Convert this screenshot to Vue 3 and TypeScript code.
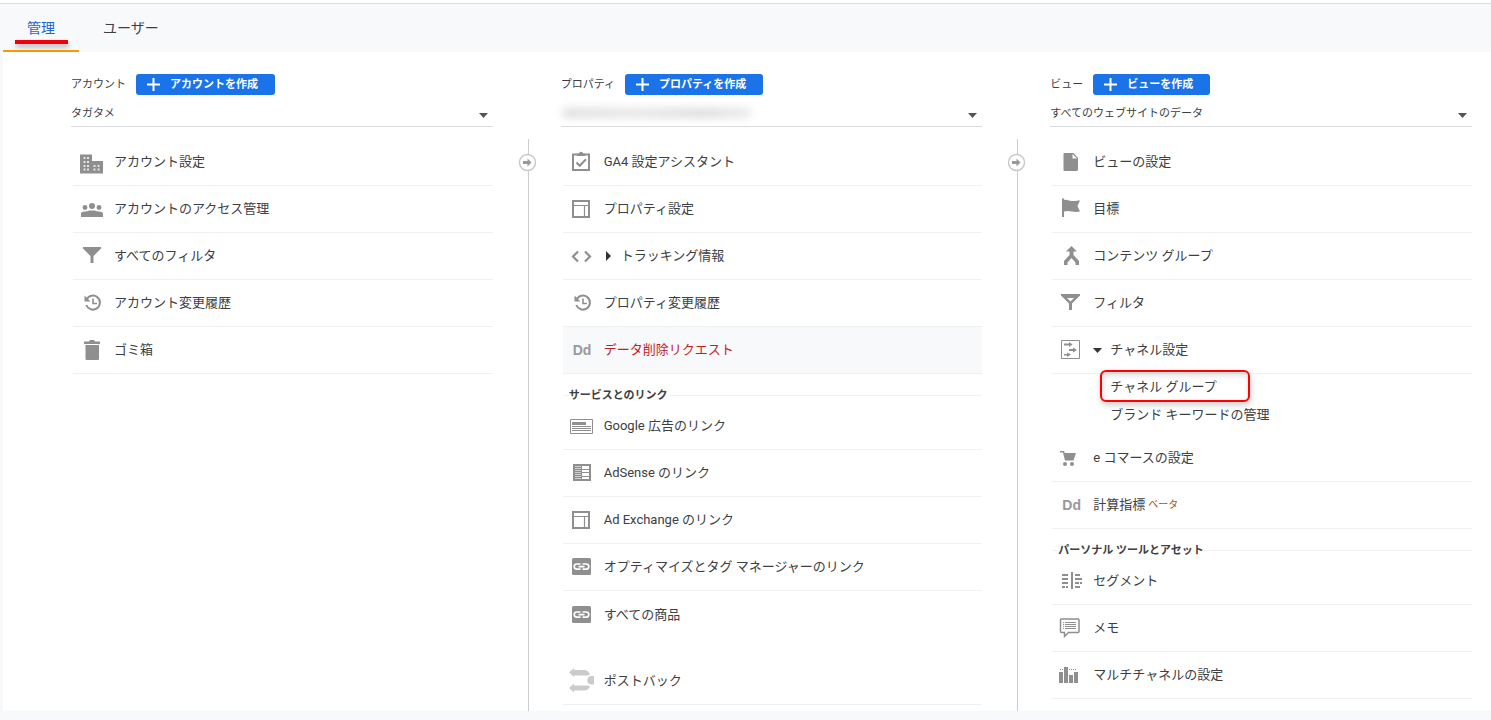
<script setup lang="ts">
import { ref } from 'vue'

interface Item {
  icon: string
  label: string
  expand?: 'open' | 'closed'
  children?: string[]
  badge?: string
  alert?: boolean
  plain?: boolean
  spaced?: boolean
}
interface Section {
  title?: string
  items: Item[]
}
interface Column {
  id: string
  title: string
  create: string
  selected: string
  masked?: boolean
  sections: Section[]
}

const activeTab = ref('管理')
const tabs = ['管理', 'ユーザー']

const columns: Column[] = [
  {
    id: 'account',
    title: 'アカウント',
    create: 'アカウントを作成',
    selected: 'タガタメ',
    sections: [
      {
        items: [
          { icon: 'building', label: 'アカウント設定' },
          { icon: 'people', label: 'アカウントのアクセス管理' },
          { icon: 'funnel', label: 'すべてのフィルタ' },
          { icon: 'history', label: 'アカウント変更履歴' },
          { icon: 'trash', label: 'ゴミ箱' },
        ],
      },
    ],
  },
  {
    id: 'property',
    title: 'プロパティ',
    create: 'プロパティを作成',
    selected: '',
    masked: true,
    sections: [
      {
        items: [
          { icon: 'check', label: 'GA4 設定アシスタント' },
          { icon: 'layout', label: 'プロパティ設定' },
          { icon: 'code', label: 'トラッキング情報', expand: 'closed' },
          { icon: 'history', label: 'プロパティ変更履歴' },
          { icon: 'dd', label: 'データ削除リクエスト', alert: true },
        ],
      },
      {
        title: 'サービスとのリンク',
        items: [
          { icon: 'card', label: 'Google 広告のリンク' },
          { icon: 'news', label: 'AdSense のリンク' },
          { icon: 'layout', label: 'Ad Exchange のリンク' },
          { icon: 'link', label: 'オプティマイズとタグ マネージャーのリンク' },
          { icon: 'link', label: 'すべての商品', plain: true },
          { icon: 'postback', label: 'ポストバック', spaced: true },
        ],
      },
    ],
  },
  {
    id: 'view',
    title: 'ビュー',
    create: 'ビューを作成',
    selected: 'すべてのウェブサイトのデータ',
    sections: [
      {
        items: [
          { icon: 'file', label: 'ビューの設定' },
          { icon: 'flag', label: '目標' },
          { icon: 'merge', label: 'コンテンツ グループ' },
          { icon: 'funnelLine', label: 'フィルタ' },
          {
            icon: 'channel',
            label: 'チャネル設定',
            expand: 'open',
            children: ['チャネル グループ', 'ブランド キーワードの管理'],
          },
          { icon: 'cart', label: 'e コマースの設定' },
          { icon: 'dd', label: '計算指標', badge: 'ベータ' },
        ],
      },
      {
        title: 'パーソナル ツールとアセット',
        items: [
          { icon: 'segment', label: 'セグメント' },
          { icon: 'memo', label: 'メモ' },
          { icon: 'bars', label: 'マルチチャネルの設定' },
        ],
      },
    ],
  },
]
</script>

<template>
  <div class="topline"></div>
  <nav class="tabs" role="tablist">
    <button
      v-for="t in tabs"
      :key="t"
      type="button"
      role="tab"
      class="tab"
      :class="{ active: t === activeTab }"
      :aria-selected="t === activeTab"
      @click="activeTab = t"
    >
      {{ t }}
      <span v-if="t === '管理'" class="underline-mark"></span>
    </button>
  </nav>

  <main class="panel">
    <template v-for="(col, ci) in columns" :key="col.id">
      <div v-if="ci > 0" class="divider">
        <svg class="divider-arrow" width="19" height="19" viewBox="0 0 19 19" aria-hidden="true">
          <circle cx="9.5" cy="9.5" r="8" fill="#fff" stroke="#c8c8c8" stroke-width="1.4" />
          <path d="M5 8h4.500V5.500L13.500 9.500l-4 4V11H5z" fill="#999" />
        </svg>
      </div>
      <section class="column">
        <header class="col-head">
          <label :for="col.id">{{ col.title }}</label>
          <button type="button" class="create">
            <svg width="13" height="13" viewBox="0 0 13 13" aria-hidden="true">
              <path d="M6.500 0v13M0 6.500h13" stroke="#fff" stroke-width="2" />
            </svg>
            <span>{{ col.create }}</span>
          </button>
        </header>
        <div class="picker">
          <select :id="col.id">
            <option>{{ col.selected }}</option>
          </select>
          <span v-if="col.masked" class="mask"></span>
          <svg class="caret" width="9" height="5" viewBox="0 0 9 5" aria-hidden="true">
            <path d="M0 0h9L4.500 5z" fill="#555" />
          </svg>
        </div>

        <div class="list">
          <template v-for="(sec, si) in col.sections" :key="si">
            <h2 v-if="sec.title" class="sec-title"><span>{{ sec.title }}</span></h2>
            <template v-for="it in sec.items" :key="it.label">
              <component
                :is="it.expand ? 'button' : 'a'"
                :href="it.expand ? undefined : '#'"
                :type="it.expand ? 'button' : undefined"
                :aria-expanded="it.expand ? it.expand === 'open' : undefined"
                class="item"
                :class="{ alert: it.alert, plain: it.plain, spaced: it.spaced }"
              >
                <span v-if="it.icon === 'dd'" class="dd">Dd</span>
                <svg v-else class="icon" width="41" height="46" viewBox="0 0 41 46" aria-hidden="true">
                  <g v-if="it.icon === 'building'">
                    <path d="M7 15.500h12v6.500h11v12.500H7z" />
                    <path
                      fill="#e4e4e4"
                      d="M10.500 18h2v2h-2zM14 18h2v2h-2zM10.500 22h2v2h-2zM14 22h2v2h-2zM10.500 26h2v2h-2zM14 26h2v2h-2zM10.500 29.500h2v2h-2zM14 29.500h2v2h-2zM20.500 26h2v2h-2zM24.500 26h2v2h-2zM20.500 29.500h2v2h-2zM24.500 29.500h2v2h-2z"
                    />
                  </g>
                  <g v-else-if="it.icon === 'people'">
                    <circle cx="12" cy="21.500" r="2.400" />
                    <circle cx="19" cy="20" r="3" />
                    <circle cx="26" cy="21.500" r="2.400" />
                    <path d="M8 31v-3C8 26 10.500 25.500 13 25.500 15 24 23 24 25 25.500 27.500 25.500 30 26 30 28v3z" />
                  </g>
                  <path v-else-if="it.icon === 'funnel'" d="M10 14h18v1.500l-7.500 7.500v7h-3v-7L10 15.500z" />
                  <g v-else-if="it.icon === 'history'" fill="none" stroke="#8f8f8f">
                    <path d="M13.600 19.500a7 7 0 1 1-.3 5.500" stroke-width="2" />
                    <path d="M20 18.500v5h4" stroke-width="1.600" />
                    <path d="M11.500 15.500v6h6z" fill="#8f8f8f" stroke="none" />
                  </g>
                  <path
                    v-else-if="it.icon === 'trash'"
                    d="M11 14.500h5l1-1.500h4l1 1.500h5v2.500H11zM12.500 18h13.500V32a1 1 0 0 1-1 1H13.500a1 1 0 0 1-1-1z"
                  />
                  <g v-else-if="it.icon === 'check'">
                    <path d="M10 15.500h16V31H10z" fill="none" stroke="#8f8f8f" stroke-width="2" />
                    <path d="M14 14.500h1.800a2.300 2.300 0 0 1 4.400 0H22V17h-8z" />
                    <path d="M13.500 23.500l3.200 3.200 6.300-6.500" fill="none" stroke="#8f8f8f" stroke-width="2" />
                  </g>
                  <g v-else-if="it.icon === 'layout'" fill="none" stroke="#8f8f8f">
                    <path d="M10 15h16v16H10z" stroke-width="2" />
                    <path d="M11 19.500h14M21.500 20v10" stroke-width="1.200" />
                  </g>
                  <path
                    v-else-if="it.icon === 'code'"
                    d="M15 18.500l-5 5 5 5M22 18.500l5 5-5 5"
                    fill="none"
                    stroke="#8f8f8f"
                    stroke-width="2.200"
                  />
                  <g v-else-if="it.icon === 'card'">
                    <path d="M7.500 16.500h22v14h-22z" fill="none" stroke="#8f8f8f" />
                    <path d="M9 19h14v3H9zM9 23h19v1H9zM9 25h19v1H9zM9 27h19v1H9z" />
                  </g>
                  <g v-else-if="it.icon === 'news'">
                    <path d="M10 14h18v17H10z" />
                    <path
                      fill="#cfcfcf"
                      d="M12 16h6v1h-6zM12 18h6v1h-6zM12 20h6v1h-6zM12 22h6v1h-6zM12 24h6v1h-6zM12 26h6v1h-6zM12 28h6v1h-6z"
                    />
                    <path fill="#fff" d="M19 16h7v3h-7zM19 20h7v2h-7zM19 23h7v3h-7zM19 27h7v2h-7z" />
                  </g>
                  <g v-else-if="it.icon === 'link'">
                    <rect x="9" y="14" width="19" height="17" rx="1.500" />
                    <path
                      d="M17.500 20h-3.700a2.600 2.600 0 0 0 0 5.200h3.700M19.500 20h3.700a2.600 2.600 0 0 1 0 5.200h-3.700M15.500 22.600h6"
                      fill="none"
                      stroke="#fff"
                      stroke-width="1.700"
                    />
                  </g>
                  <g v-else-if="it.icon === 'postback'" fill="#cbcbcb">
                    <path d="M6 14.500l5-4.500v2h10c3 0 5 2 6 4.500-1 .8-2 1-3 1H11V19z" />
                    <path d="M6 30l5-4.500v2h13c1 0 2 .2 3 1-1 2.500-3 4-6 4H11v2z" />
                    <path d="M31 18v8.500h-3a4.300 4.300 0 0 1 0-8.500z" />
                  </g>
                  <g v-else-if="it.icon === 'file'">
                    <path d="M12.500 14h9l4.500 5v11.500a1.500 1.500 0 0 1-1.500 1.500h-12a1 1 0 0 1-1-1V15a1 1 0 0 1 1-1z" />
                    <path d="M20.500 15v4.500H25z" fill="#fff" />
                  </g>
                  <path
                    v-else-if="it.icon === 'flag'"
                    d="M10 12.500h2V14c3-1 5 1 8 1 3 .3 5-.5 8-.5L25.500 20l2.500 5.500c-4 .8-6 .3-8 0-3-.5-5-1-8 0V31h-2z"
                  />
                  <path
                    v-else-if="it.icon === 'merge'"
                    d="M19.500 13l5.500 5.500h-3.500V22l5.500 6v4h-3.500v-2.500l-4-4.500-4 4.500V32H12v-4l5.500-6v-3.500H14z"
                  />
                  <g v-else-if="it.icon === 'funnelLine'">
                    <path d="M9 14h19v1.500L20 23.500v6.500h-3v-6.500L9 15.500z" />
                    <path d="M15 18h7l-3.500 3.500z" fill="#fff" />
                  </g>
                  <g v-else-if="it.icon === 'channel'">
                    <path d="M9.500 13.500h18v18h-18z" fill="none" stroke="#8f8f8f" />
                    <path
                      d="M12 16.500h5V15l3.500 2.500L17 20v-1.500h-5zM17 22h4v-1.500l4 2.500-4 2.500V24h-4zM12 27h3v-1.500l4 2-4 2.500v-1.500h-3z"
                    />
                  </g>
                  <g v-else-if="it.icon === 'cart'">
                    <path d="M8 16h4l.8 2H24l-2.500 7.500H13L11 17.500H8z" />
                    <circle cx="13" cy="29" r="2" />
                    <circle cx="20" cy="29" r="2" />
                  </g>
                  <path
                    v-else-if="it.icon === 'segment'"
                    d="M19 14h2v17h-2zM10 16h6v2h-6zM12 20h4v2h-4zM10 24h6v2h-6zM10 28h3v2h-3zM14 28h2v2h-2zM10 20h6v2h-6zM23 16h5v2h-5zM23 20h7v2h-7zM23 24h4v2h-4zM28 24h2v2h-2zM23 28h5v2h-5z"
                  />
                  <g v-else-if="it.icon === 'memo'">
                    <path
                      d="M9.500 14h16.500a1 1 0 0 1 1 1v11.500a1 1 0 0 1-1 1H16.500L12.500 31.500v-4h-3a1 1 0 0 1-1-1V15a1 1 0 0 1 1-1z"
                      fill="none"
                      stroke="#8f8f8f"
                      stroke-width="1.500"
                    />
                    <path d="M11 17h1v1h-1zM13 17h11v1H13zM11 19h1v1h-1zM13 19h11v1H13zM11 21h1v1h-1zM13 21h11v1H13zM11 23h1v1h-1zM13 23h11v1H13z" />
                  </g>
                  <g v-else-if="it.icon === 'bars'">
                    <path d="M7 20h4v11H7zM12 15h4v16h-4zM17 23h4v8h-4zM22 20h4v11h-4z" />
                    <path d="M8 17h1v1H8zM10 17h1v1h-1zM17 17h1v1h-1zM19 17h1v1h-1zM21 17h1v1h-1zM23 17h1v1h-1z" />
                  </g>
                </svg>
                <svg v-if="it.expand" class="expander" width="17" height="10" viewBox="0 0 17 10" aria-hidden="true">
                  <path v-if="it.expand === 'open'" d="M0 3h9L4.500 8z" />
                  <path v-else d="M2 0l5 5-5 5z" />
                </svg>
                <span class="text">{{ it.label }}</span>
                <small v-if="it.badge" class="badge">{{ it.badge }}</small>
              </component>
              <ul v-if="it.children" class="children">
                <li v-for="(c, i) in it.children" :key="c">
                  <a href="#">{{ c }}</a>
                  <span v-if="i === 0" class="box-mark"></span>
                </li>
              </ul>
            </template>
          </template>
        </div>
      </section>
    </template>
  </main>
</template>

<style>
body {
  margin: 0;
  background: #f8f9fb;
}
#app {
  font-family: Roboto, 'Noto Sans CJK JP', sans-serif;
  font-size: 13px;
  color: #3c4043;
}
</style>

<style scoped>
* {
  box-sizing: border-box;
}
button,
select {
  font: inherit;
  color: inherit;
  border: 0;
  padding: 0;
  margin: 0;
  background: none;
}
button {
  cursor: pointer;
}
a {
  color: inherit;
  text-decoration: none;
}
.topline {
  height: 4px;
  background: #fff;
  border-bottom: 1px solid #dcdcdc;
}
.tabs {
  display: flex;
  margin-left: 3px;
  height: 48px;
}
.tab {
  position: relative;
  padding: 0 24px;
  font-size: 14px;
  border-bottom: 2px solid transparent;
}
.tab.active {
  color: #1967d2;
  border-bottom-color: #ff9800;
}
.underline-mark {
  position: absolute;
  left: 12px;
  right: 11px;
  bottom: 6px;
  height: 4px;
  background: #f00008;
  box-shadow: 1px 3px 5px rgba(0, 0, 0, 0.3);
}
.panel {
  display: grid;
  grid-template-columns: 1fr 68px 1fr 68px 1fr;
  margin-left: 3px;
  padding: 22px 19px 0 68px;
  background: #fff;
}
.column {
  min-width: 0;
  padding-bottom: 6px;
}
.col-head {
  display: flex;
  align-items: center;
  height: 21px;
  font-size: 11px;
}
.col-head label {
  margin-right: 10px;
  line-height: 16px;
}
.create {
  display: flex;
  align-items: center;
  gap: 10px;
  height: 21px;
  padding: 0 17px 0 11px;
  border-radius: 3px;
  background: #1a73e8;
  color: #fff;
  font-weight: 700;
  line-height: 16px;
}
.picker {
  position: relative;
  height: 32px;
  padding-top: 6px;
  border-bottom: 1px solid #dadce0;
}
.picker select {
  appearance: none;
  display: block;
  width: 100%;
  height: 25px;
  font-size: 11px;
  outline: none;
}
.caret {
  position: absolute;
  right: 5px;
  top: 18px;
}
.mask {
  position: absolute;
  left: 2px;
  top: 13px;
  width: 188px;
  height: 10px;
  background: linear-gradient(90deg, #dedede, #e6e6e6 40%, #dcdcdc 75%, #ebebeb);
  filter: blur(4px);
}
.divider {
  position: relative;
  margin-top: 65px;
}
.divider::before {
  content: '';
  position: absolute;
  left: 35px;
  top: 0;
  bottom: 0;
  width: 1px;
  background: #ccc;
}
.divider-arrow {
  position: absolute;
  left: 25px;
  top: 14px;
}
.list {
  margin: 12px 0 0 2px;
}
.item {
  display: flex;
  align-items: center;
  width: 100%;
  height: 47px;
  border-bottom: 1px solid #f1f1f1;
  text-align: left;
  line-height: 20px;
}
.item .text {
  margin-bottom: 1px;
}
.item.alert {
  background: #f8f9fb;
  color: #c5221f;
}
.item.plain {
  margin-top: 1px;
  border-bottom-color: transparent;
}
.item.spaced {
  margin-top: 19px;
}
.icon {
  flex: none;
  fill: #8f8f8f;
}
.expander {
  flex: none;
  fill: #333;
}
.dd {
  flex: none;
  width: 41px;
  padding-left: 10px;
  font-family: 'Liberation Sans', sans-serif;
  font-weight: 700;
  font-size: 14px;
  color: #999;
}
.badge {
  margin-left: 3px;
  font-size: 10px;
  color: #a0522d;
}
.children {
  list-style: none;
  margin: -1px 0 6px;
  padding: 0 0 0 58px;
  line-height: 28px;
}
.children li {
  position: relative;
  height: 28px;
}
.box-mark {
  position: absolute;
  left: -10px;
  top: -3px;
  width: 150px;
  height: 32px;
  border: 2px solid #f00;
  border-radius: 6px;
  box-shadow: 1px 3px 6px rgba(0, 0, 0, 0.2), inset 1px 3px 6px rgba(0, 0, 0, 0.15);
  pointer-events: none;
}
.sec-title {
  display: flex;
  align-items: center;
  margin: 0;
  height: 29px;
  padding: 14px 0 0 6px;
  font-size: 11px;
  line-height: 16px;
  font-weight: 700;
  background: linear-gradient(#f1f1f1, #f1f1f1) 0 21px / 100% 1px no-repeat;
}
.sec-title span {
  background: #fff;
}
</style>
